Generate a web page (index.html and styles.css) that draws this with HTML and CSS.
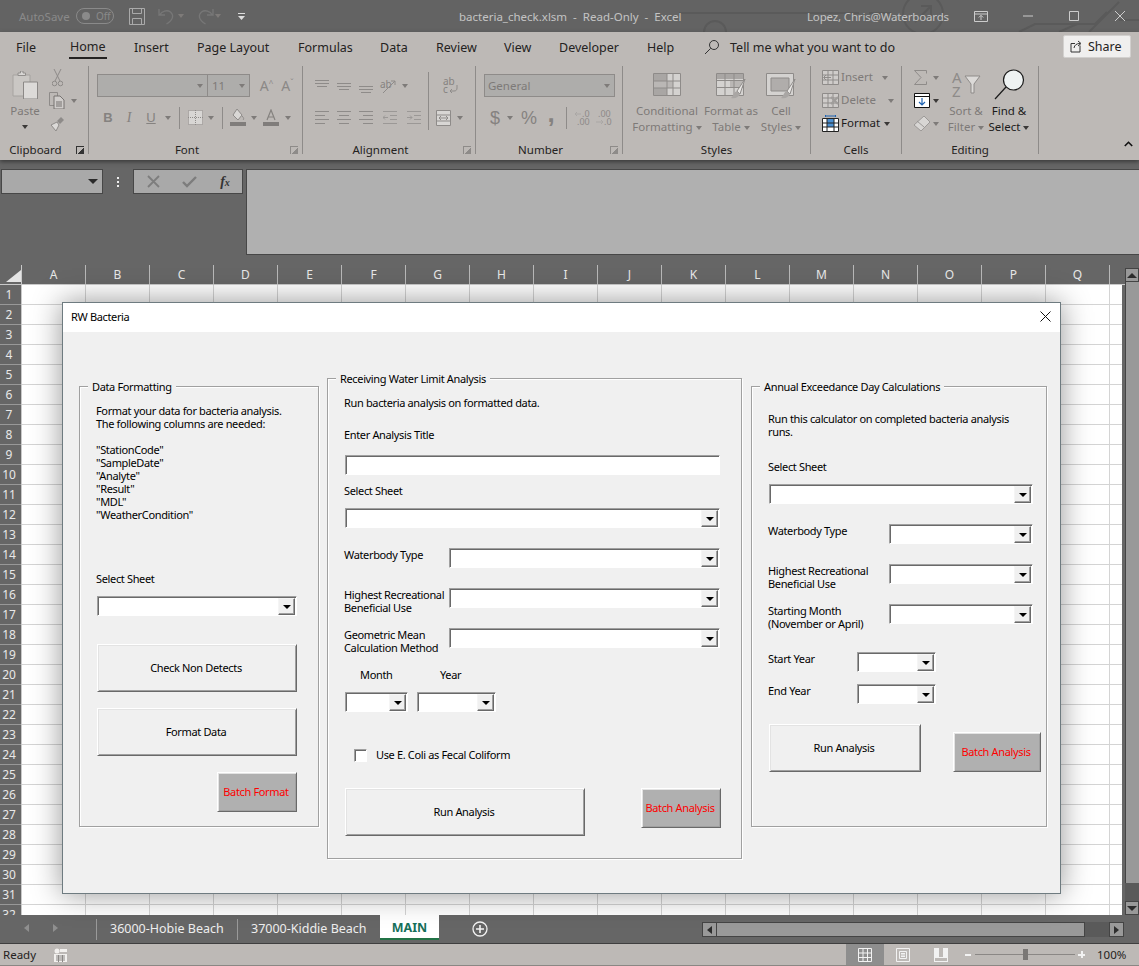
FILE: index.html
```html
<!DOCTYPE html>
<html lang="en">
<head>
<meta charset="utf-8">
<title>bacteria_check.xlsm - Read-Only - Excel</title>
<link rel="stylesheet" href="styles.css">
</head>
<body>
<div class="app">
  <header class="titlebar">
    <svg class="circuit" width="520" height="32" viewBox="0 0 520 32"><g fill="none" stroke="#5a5a5a" stroke-width="2"><path d="M60 13h180"/><path d="M250 13h22"/><circle cx="304" cy="14" r="20"/><path d="M296 22l16-16M302 6h10v10"/><path d="M400 32l16-8h60l12-12M440 32l18-8M470 32l30-30M500 20h20"/></g><circle cx="96" cy="32" r="11" fill="none" stroke="#5a5a5a" stroke-width="2"/></svg>
    <div class="qat">
      <span class="autosave">AutoSave</span>
      <span class="toggle"><i class="toggle-dot"></i><span>Off</span></span>
      <svg class="save" width="16" height="17" viewBox="0 0 16 17"><path d="M.5.5h15v16H.5zM3.5.5v5h9v-5M3.5 16.5v-6h9v6" fill="none" stroke="#aaa"/></svg>
      <svg class="undo" width="18" height="18" viewBox="0 0 18 18"><path d="M1 2v6h6M1.5 8C4 4 9 2.5 12.5 5c3.5 3 3 8-4 12" fill="none" stroke="#777" stroke-width="1.3"/></svg>
      <i class="caret caret-dim"></i>
      <svg class="redo" width="18" height="18" viewBox="0 0 18 18"><path d="M17 2v6h-6M16.500 8C14 4 9 2.500 5.500 5c-3.500 3-3 8 4 12" fill="none" stroke="#777" stroke-width="1.300"/></svg>
      <i class="caret caret-dim"></i>
      <svg class="custom" width="7" height="7" viewBox="0 0 7 7"><path d="M0 0h7v1H0zM0 3h7L3.500 7z" fill="#ddd"/></svg>
    </div>
    <div class="doc-title">bacteria_check.xlsm &nbsp;-&nbsp; Read-Only &nbsp;-&nbsp; Excel</div>
    <div class="win">
      <span class="user">Lopez, Chris@Waterboards</span>
      <svg class="w-display" width="14" height="11" viewBox="0 0 14 11"><path d="M.5.500h13v10H.5zM.5 3h13M7 9V4.500M4.800 6.500 7 4.300l2.200 2.200" fill="none" stroke="#ccc"/></svg>
      <svg class="w-min" width="10" height="2" viewBox="0 0 10 2"><path d="M0 1h10" stroke="#ccc"/></svg>
      <svg class="w-max" width="10" height="10" viewBox="0 0 10 10"><path d="M.5.500h9v9h-9z" fill="none" stroke="#ccc"/></svg>
      <svg class="w-close" width="10" height="10" viewBox="0 0 10 10"><path d="M0 0l10 10M10 0 0 10" stroke="#ccc"/></svg>
    </div>
  </header>

  <section class="ribbon">
    <nav class="tabs">
      <span class="tab t-file">File</span>
      <span class="tab t-home">Home</span>
      <span class="tab t-insert">Insert</span>
      <span class="tab t-layout">Page Layout</span>
      <span class="tab t-formulas">Formulas</span>
      <span class="tab t-data">Data</span>
      <span class="tab t-review">Review</span>
      <span class="tab t-view">View</span>
      <span class="tab t-dev">Developer</span>
      <span class="tab t-help">Help</span>
      <svg class="t-search" width="16" height="16" viewBox="0 0 16 16"><circle cx="10" cy="6" r="4.500" fill="none" stroke="#333"/><path d="M6.700 9.300 1 15" stroke="#333"/></svg>
      <span class="tab t-tell">Tell me what you want to do</span>
      <span class="share"><svg width="14" height="14" viewBox="0 0 14 14"><path d="M10 6.500V13H1V4.500h4M4 9c.5-3 2.500-4.500 6-4.500M8 2l3 2.500L8 7" fill="none" stroke="#333"/></svg>Share</span>
    </nav>
    <div class="groups">
      <div class="group g-clip">
        <div class="gbody">
          <div class="big b-paste">
            <div class="big-ic"><svg width="26" height="28" viewBox="0 0 26 28"><path d="M1 4h17v21H1z" fill="#cac7c4" stroke="#a6a3a0"/><path d="M6 4V2h2.500V0h2.500v2h2.500v2.500H6z" fill="#d8d6d4" stroke="#918e8c"/><path d="M11.500 11h14v17h-14z" fill="#dcdad8" stroke="#8b8886"/></svg></div>
            <span class="dim">Paste</span><i class="caret caret-big"></i>
          </div>
          <div class="rows23 clip-small">
            <div class="row"><svg class="ml7" width="11" height="18" viewBox="0 0 11 18"><path d="M2 0l6 12M9 0 3 12" stroke="#8e8b89" fill="none"/><circle cx="2.500" cy="14.500" r="2.300" fill="none" stroke="#8e8b89"/><circle cx="8.500" cy="14.500" r="2.300" fill="none" stroke="#8e8b89"/></svg></div>
            <div class="row"><svg width="17" height="17" viewBox="0 0 17 17"><path d="M.5.500h8v13h-8z" fill="none" stroke="#8e8b89"/><path d="M5 4h6l4 4v9H5z" fill="#cfccca" stroke="#767371"/><path d="M7 10h6M7 12h6M7 14h6" stroke="#767371"/></svg><i class="caret caret-dim cml"></i></div>
            <div class="row"><svg width="16" height="16" viewBox="0 0 16 16"><path d="M12 1l3 3-4 4-3-3z" fill="#8e8b89"/><path d="M8 6 2 9l5 6 3-6z" fill="#dbd9d7" stroke="#8e8b89"/></svg></div>
          </div>
        </div>
        <div class="glabel"><span>Clipboard</span><i class="launch launch-on"></i></div>
      </div>

      <div class="group g-font">
        <div class="gbody">
          <div class="rows2">
            <div class="font-r1">
              <span class="box box-font"><i class="caret caret-dim"></i></span>
              <span class="box box-size"><span class="dim">11</span><i class="caret caret-dim"></i></span>
              <span class="grow-a">A<sup>^</sup></span>
              <span class="grow-a">A<sup>ˇ</sup></span>
            </div>
            <div class="font-r2">
              <b class="glyph">B</b>
              <i class="glyph glyph-i">I</i>
              <u class="glyph">U</u>
              <i class="caret caret-dim"></i>
              <i class="vline"></i>
              <svg width="15" height="15" viewBox="0 0 15 15"><path d="M.5.500h14v14H.5z" fill="#d8d6d4" stroke="#8e8b89" stroke-dasharray="1 1"/><path d="M7.500 0v15M0 7.500h15" stroke="#8e8b89" stroke-dasharray="1 1"/></svg>
              <i class="caret caret-dim"></i>
              <i class="vline"></i>
              <svg width="16" height="17" viewBox="0 0 16 17"><path d="M7 0l5 6-4 5-5-5z" fill="#d9d7d5" stroke="#8e8b89"/><path d="M12 7c2 2 2 3 1 4" stroke="#8e8b89" fill="none"/><path d="M0 13h16v4H0z" fill="#807d7b"/></svg>
              <i class="caret caret-dim"></i>
              <svg width="16" height="17" viewBox="0 0 16 17"><path d="M4 11 8 1l4 10M5.500 8h5" fill="none" stroke="#85827f" stroke-width="1.200"/><path d="M0 13h16v4H0z" fill="#807d7b"/></svg>
              <i class="caret caret-dim"></i>
            </div>
          </div>
        </div>
        <div class="glabel"><span>Font</span><i class="launch"></i></div>
      </div>

      <div class="group g-align">
        <div class="gbody">
          <div class="rows2 align-left">
            <div class="align-r1">
              <svg width="14" height="14" viewBox="0 0 14 14"><path d="M0 1.500h14M0 4.500h14M2 7.500h10" stroke="#8e8b89"/></svg>
              <svg width="14" height="14" viewBox="0 0 14 14"><path d="M0 4.500h14M0 7.500h14M2 10.500h10" stroke="#8e8b89"/></svg>
              <svg width="14" height="14" viewBox="0 0 14 14"><path d="M0 7.500h14M0 10.500h14M2 13.500h10" stroke="#8e8b89"/></svg>
              <svg class="vis" width="17" height="14" viewBox="0 0 17 14"><text x="0" y="9" class="svgt">ab</text><path d="M3 14 15 2M11 2h4v4" stroke="#8e8b89" fill="none"/></svg>
              <i class="caret caret-dim"></i>
            </div>
            <div class="align-r2">
              <svg width="14" height="13" viewBox="0 0 14 13"><path d="M0 .500h14M0 4.500h10M0 8.500h14M0 12.500h10" stroke="#8e8b89"/></svg>
              <svg width="14" height="13" viewBox="0 0 14 13"><path d="M0 .500h14M2 4.500h10M0 8.500h14M2 12.500h10" stroke="#8e8b89"/></svg>
              <svg width="14" height="13" viewBox="0 0 14 13"><path d="M0 .500h14M4 4.500h10M0 8.500h14M4 12.500h10" stroke="#8e8b89"/></svg>
              <svg width="14" height="13" viewBox="0 0 14 13"><path d="M0 .500h14M7 4.500h7M7 8.500h7M0 12.500h14M5 6.500H0M2 4.500l-2 2 2 2" fill="none" stroke="#9b9896"/></svg>
              <svg width="14" height="13" viewBox="0 0 14 13"><path d="M0 .500h14M7 4.500h7M7 8.500h7M0 12.500h14M0 6.500h5M3 4.500l2 2-2 2" fill="none" stroke="#9b9896"/></svg>
            </div>
          </div>
          <i class="vline vline-tall"></i>
          <div class="rows2 align-right">
            <div class="wrap-row"><svg class="vis" width="16" height="18" viewBox="0 0 16 18"><text x="0" y="8" class="svgt">ab</text><text x="0" y="16" class="svgt">c</text><path d="M14 8v3c0 2-1 3-3 3H7M9 12l-2 2 2 2" fill="none" stroke="#8e8b89"/></svg></div>
            <div class="merge-row"><svg width="15" height="16" viewBox="0 0 15 16"><path d="M.5.500h14v15H.5zM0 5h15M0 11h15" fill="#d8d6d4" stroke="#8e8b89"/><path d="M3 8h9M5 6 3 8l2 2M10 6l2 2-2 2" fill="none" stroke="#8e8b89"/></svg><i class="caret caret-dim"></i></div>
          </div>
        </div>
        <div class="glabel"><span>Alignment</span><i class="launch"></i></div>
      </div>

      <div class="group g-num">
        <div class="gbody">
          <div class="rows2">
            <div class="num-r1"><span class="box box-num"><span class="dim">General</span><i class="caret caret-dim"></i></span></div>
            <div class="num-r2">
              <span class="glyph glyph-big">$</span>
              <i class="caret caret-dim"></i>
              <span class="glyph glyph-big">%</span>
              <span class="glyph glyph-comma">,</span>
              <i class="vline"></i>
              <svg class="vis" width="18" height="14" viewBox="0 0 18 14"><text x="8" y="6" class="svgs">.0</text><text x="3" y="14" class="svgs">.00</text><path d="M7 3H1M3 1 1 3l2 2" fill="none" stroke="#aaa7a5"/></svg>
              <svg class="vis" width="18" height="14" viewBox="0 0 18 14"><text x="3" y="6" class="svgs">.00</text><text x="9" y="14" class="svgs">.0</text><path d="M1 11h7M6 9l2 2-2 2" fill="none" stroke="#aaa7a5"/></svg>
            </div>
          </div>
        </div>
        <div class="glabel"><span>Number</span><i class="launch"></i></div>
      </div>

      <div class="group g-styles">
        <div class="gbody">
          <div class="big b-cond">
            <div class="big-ic"><svg width="28" height="23" viewBox="0 0 28 23"><path d="M.5.500h27v22H.5z" fill="#d4d2d0" stroke="#8e8b89"/><path d="M1 1h13v7H1zM1 15h13v7H1z" fill="#a9a6a4"/><path d="M1 8h19v7H1z" fill="#bab7b5"/><path d="M0 8h28M0 15h28M14 0v23M20 0v23" stroke="#8e8b89"/></svg></div>
            <span class="dim">Conditional</span><span class="dim">Formatting<i class="caret caret-dim cin"></i></span>
          </div>
          <div class="big b-table">
            <div class="big-ic"><svg width="30" height="27" viewBox="0 0 30 27"><path d="M.5.500h27v22H.5z" fill="#d4d2d0" stroke="#8e8b89"/><path d="M1 1h26v5H1z" fill="#a9a6a4"/><path d="M14 7h13v7H14z" fill="#bab7b5"/><path d="M0 7.500h28M0 14.500h28M9 0v23M18 0v23" stroke="#8e8b89"/><path d="M29 6 21 18l3 3z" fill="#e8e6e4" stroke="#8e8b89"/><path d="M21 18c-3 1-3 4-6 7 4 1 8-1 9-4z" fill="#a9a6a4"/></svg></div>
            <span class="dim">Format as</span><span class="dim">Table<i class="caret caret-dim cin"></i></span>
          </div>
          <div class="big b-cell">
            <div class="big-ic"><svg width="30" height="27" viewBox="0 0 30 27"><path d="M.5.500h27v22H.5z" fill="#d4d2d0" stroke="#8e8b89"/><path d="M5 5h18v13H5z" fill="#b0adab" stroke="#8e8b89"/><path d="M29 6 21 18l3 3z" fill="#e8e6e4" stroke="#8e8b89"/><path d="M21 18c-3 1-3 4-6 7 4 1 8-1 9-4z" fill="#a9a6a4"/></svg></div>
            <span class="dim">Cell</span><span class="dim">Styles<i class="caret caret-dim cin"></i></span>
          </div>
        </div>
        <div class="glabel glabel-c"><span>Styles</span></div>
      </div>

      <div class="group g-cells">
        <div class="gbody">
          <div class="rows23">
            <div class="row"><svg class="cell-ic" width="17" height="15" viewBox="0 0 17 15"><path d="M.5.500h16v14H.5zM0 5h17M0 10h17M6 0v15M11 0v15" fill="#cfccca" stroke="#8e8b89"/><path d="M9 7.500H2M4 5 1.500 7.500 4 10" fill="none" stroke="#8e8b89"/></svg><span class="dim">Insert</span><i class="caret caret-dim c-ins"></i></div>
            <div class="row"><svg class="cell-ic" width="17" height="15" viewBox="0 0 17 15"><path d="M.5.500h16v14H.5zM0 5h17M0 10h17M6 0v15M11 0v15" fill="#cfccca" stroke="#8e8b89"/><path d="M9 4l7 7M16 4l-7 7" stroke="#a09d9b" stroke-width="2"/></svg><span class="dim">Delete</span><i class="caret caret-dim c-del"></i></div>
            <div class="row"><svg class="cell-ic" width="17" height="17" viewBox="0 0 17 17"><path d="M.5 3.500h16v13H.5z" fill="#fff" stroke="#222"/><path d="M5 4h7v8H5z" fill="#4a8fd1"/><path d="M0 8h17M0 12h17M5 3v14M12 3v14" stroke="#222"/><path d="M3.500 1h10M3.500 0v2M13.500 0v2" stroke="#1e62b0"/></svg><span class="on">Format</span><i class="caret c-fmt"></i></div>
          </div>
        </div>
        <div class="glabel glabel-c"><span>Cells</span></div>
      </div>

      <div class="group g-edit">
        <div class="gbody">
          <div class="rows23 edit-small">
            <div class="row"><svg width="13" height="15" viewBox="0 0 13 15"><path d="M12.500 3.500V.5H.5L7 7.500.5 14.500h12v-3" fill="none" stroke="#8e8b89"/></svg><i class="caret caret-dim c-sig"></i></div>
            <div class="row"><svg width="16" height="15" viewBox="0 0 16 15"><path d="M.5.500h15v14H.5z" fill="#fff" stroke="#111"/><path d="M0 3.500h16" stroke="#111"/><path d="M8 5v7M5 9l3 3 3-3" fill="none" stroke="#1e62b0" stroke-width="1.200"/></svg><i class="caret c-fill"></i></div>
            <div class="row"><svg width="16" height="15" viewBox="0 0 16 15"><path d="M10 0l6 6-9 9-7-6z" fill="#d8d6d4" stroke="#9c9997"/><path d="M3 5l7 6" stroke="#9c9997"/></svg><i class="caret caret-dim c-clr"></i></div>
          </div>
          <div class="big b-sort">
            <div class="big-ic"><svg class="vis" width="29" height="26" viewBox="0 0 29 26"><text x="0" y="11" class="svgz">A</text><text x="0" y="25" class="svgz">Z</text><path d="M13 4h15l-6 8v9h-3v-9z" fill="#dcdad8" stroke="#8e8b89"/></svg></div>
            <span class="dim">Sort &amp;</span><span class="dim">Filter<i class="caret caret-dim cin"></i></span>
          </div>
          <div class="big b-find">
            <div class="big-ic"><svg width="31" height="31" viewBox="0 0 31 31"><circle cx="19.500" cy="11" r="10" fill="#eef2f2" stroke="#1b1b1b" stroke-width="1.200"/><path d="M12 18 1 30" stroke="#1b1b1b" stroke-width="1.200"/></svg></div>
            <span class="on">Find &amp;</span><span class="on">Select<i class="caret cin"></i></span>
          </div>
        </div>
        <div class="glabel glabel-c"><span>Editing</span></div>
      </div>
      <svg class="collapse" width="9" height="6" viewBox="0 0 9 6"><path d="M.8 5 4.500 1.300 8.200 5" fill="none" stroke="#111" stroke-width="1.600"/></svg>
    </div>
  </section>

  <section class="formula">
    <div class="namebox"><i class="caret caret-dark"></i></div>
    <div class="fdots"><i></i><i></i><i></i></div>
    <div class="fbtns">
      <svg width="13" height="13" viewBox="0 0 13 13"><path d="M1 1l11 11M12 1 1 12" stroke="#7d7d7d" stroke-width="1.800"/></svg>
      <svg width="15" height="12" viewBox="0 0 15 12"><path d="M1 6l4 4 9-9" fill="none" stroke="#7d7d7d" stroke-width="2.400"/></svg>
      <span class="fx">f<small>x</small></span>
    </div>
    <div class="finput"></div>
  </section>

  <section class="sheet">
    <div class="sheet-main">
      <div class="colheads">
        <div class="corner"><svg width="15" height="12" viewBox="0 0 15 12"><path d="M15 0v12H0z" fill="#e4e4e4"/></svg></div>
        <span class="col">A</span><span class="col">B</span><span class="col">C</span><span class="col">D</span><span class="col">E</span><span class="col">F</span><span class="col">G</span><span class="col">H</span><span class="col">I</span><span class="col">J</span><span class="col">K</span><span class="col">L</span><span class="col">M</span><span class="col">N</span><span class="col">O</span><span class="col">P</span><span class="col">Q</span>
      </div>
      <div class="cells-wrap">
        <div class="rowheads">
          <span>1</span><span>2</span><span>3</span><span>4</span><span>5</span><span>6</span><span>7</span><span>8</span><span>9</span><span>10</span><span>11</span><span>12</span><span>13</span><span>14</span><span>15</span><span>16</span><span>17</span><span>18</span><span>19</span><span>20</span><span>21</span><span>22</span><span>23</span><span>24</span><span>25</span><span>26</span><span>27</span><span>28</span><span>29</span><span>30</span><span>31</span><span>32</span>
        </div>
        <div class="cells"></div>
      </div>
    </div>
    <div class="vscroll">
      <span class="sb-btn"><i class="tri tri-up"></i></span>
      <span class="v-thumb"></span>
      <span class="v-track"></span>
      <span class="sb-btn"><i class="tri tri-down"></i></span>
    </div>
  </section>

  <footer class="sheetbar">
    <i class="tri tri-left nav-a"></i>
    <i class="tri tri-right nav-b"></i>
    <span class="stab stab-first">36000-Hobie Beach</span>
    <span class="stab">37000-Kiddie Beach</span>
    <span class="stab-main">MAIN</span>
    <svg class="addsheet" width="16" height="16" viewBox="0 0 16 16"><circle cx="8" cy="8" r="7" fill="none" stroke="#f2f2f2" stroke-width="1.300"/><path d="M8 4v8M4 8h8" stroke="#f2f2f2" stroke-width="1.600"/></svg>
    <div class="hscroll">
      <span class="sb-btn sb-h"><i class="tri tri-left tri-dark"></i></span>
      <span class="h-thumb"></span>
      <span class="h-track"></span>
      <span class="sb-btn sb-h"><i class="tri tri-right tri-dark"></i></span>
    </div>
  </footer>

  <footer class="status">
    <span class="ready">Ready</span>
    <svg class="macro" width="13" height="14" viewBox="0 0 13 14"><circle cx="3" cy="3" r="2.500" fill="#f2f0ee"/><path d="M6 1h7v3H6zM0 6h13v8H0z" fill="#f2f0ee"/><path d="M2 8h9M2 10h9M2 12h9M4.500 7v7M8.500 7v7" stroke="#8b8886"/></svg>
    <div class="views">
      <span class="view view-on"><svg width="14" height="14" viewBox="0 0 14 14"><path d="M.5.500h13v13H.5zM0 5h14M0 9.500h14M5 0v14M9.500 0v14" fill="none" stroke="#f2f2f2"/></svg></span>
      <span class="view"><svg width="14" height="14" viewBox="0 0 14 14"><path d="M.5.500h13v13H.5z" fill="none" stroke="#f2f2f2"/><path d="M3.500 3.500h7v7h-7zM5 5.500h4M5 7h4M5 8.500h4" fill="none" stroke="#f2f2f2"/></svg></span>
      <span class="view"><svg width="14" height="14" viewBox="0 0 14 14"><path d="M0 0h5v9h4V0h5v14H0z" fill="#f2f2f2"/><path d="M1 10h12v3H1z" fill="#bdb9b6"/></svg></span>
    </div>
    <div class="zoomer">
      <i class="z-minus"></i>
      <span class="z-line"><i class="z-thumb"></i></span>
      <i class="z-plus"></i>
    </div>
    <span class="pct">100%</span>
  </footer>

  <div class="dialog">
    <div class="dlg-title">
      <span>RW Bacteria</span>
      <svg width="11" height="11" viewBox="0 0 11 11"><path d="M.5.500l10 10M10.500.500l-10 10" stroke="#111"/></svg>
    </div>
    <div class="dlg-body">
      <div class="fbox fb-1">
        <span class="legend">Data Formatting</span>
        <div class="txt pre">Format your data for bacteria analysis.
The following columns are needed:

"StationCode"
"SampleDate"
"Analyte"
"Result"
"MDL"
"WeatherCondition"</div>
        <div class="txt m51">Select Sheet</div>
        <div class="combo m11"><span class="cbtn"></span></div>
        <button class="btn b-wide m28">Check Non Detects</button>
        <button class="btn b-wide m16">Format Data</button>
        <button class="btn btn-batch bf m16">Batch Format</button>
      </div>

      <div class="fbox fb-2">
        <span class="legend">Receiving Water Limit Analysis</span>
        <div class="txt">Run bacteria analysis on formatted data.</div>
        <div class="txt m19">Enter Analysis Title</div>
        <div class="input m14"></div>
        <div class="txt m9">Select Sheet</div>
        <div class="combo m11"><span class="cbtn"></span></div>
        <div class="frow fr-2 m20"><div class="txt">Waterbody Type</div><div class="combo"><span class="cbtn"></span></div></div>
        <div class="frow fr-2 m20"><div class="txt">Highest Recreational<br>Beneficial Use</div><div class="combo"><span class="cbtn"></span></div></div>
        <div class="frow fr-2 m20"><div class="txt">Geometric Mean<br>Calculation Method</div><div class="combo"><span class="cbtn"></span></div></div>
        <div class="my-labels m20"><span class="txt">Month</span><span class="txt">Year</span></div>
        <div class="my-combos m11"><div class="combo c-month"><span class="cbtn"></span></div><div class="combo c-year"><span class="cbtn"></span></div></div>
        <label class="check"><span class="cbx"></span><span class="txt">Use E. Coli as Fecal Coliform</span></label>
        <div class="btnrow m26"><button class="btn b-run2">Run Analysis</button><button class="btn btn-batch bb2">Batch Analysis</button></div>
      </div>

      <div class="fbox fb-3">
        <span class="legend">Annual Exceedance Day Calculations</span>
        <div class="txt">Run this calculator on completed bacteria analysis<br>runs.</div>
        <div class="txt m22">Select Sheet</div>
        <div class="combo m11"><span class="cbtn"></span></div>
        <div class="frow fr-3 m20"><div class="txt">Waterbody Type</div><div class="combo"><span class="cbtn"></span></div></div>
        <div class="frow fr-3 m20"><div class="txt">Highest Recreational<br>Beneficial Use</div><div class="combo"><span class="cbtn"></span></div></div>
        <div class="frow fr-3 m20"><div class="txt">Starting Month<br>(November or April)</div><div class="combo"><span class="cbtn"></span></div></div>
        <div class="frow fr-y m28"><div class="txt">Start Year</div><div class="combo c-year"><span class="cbtn"></span></div></div>
        <div class="frow fr-y m12"><div class="txt">End Year</div><div class="combo c-year"><span class="cbtn"></span></div></div>
        <div class="btnrow btnrow-end m20"><button class="btn b-run3">Run Analysis</button><button class="btn btn-batch bb3">Batch Analysis</button></div>
      </div>
    </div>
  </div>
</div>
</body>
</html>
```

FILE: styles.css
```css
* { box-sizing: border-box; }
html, body { margin: 0; padding: 0; }
body { width: 1139px; height: 966px; overflow: hidden; background: #666; font-family: "Noto Sans", "Liberation Sans", sans-serif; font-size: 12px; color: #222; }
.app { position: relative; width: 1139px; height: 966px; overflow: hidden; display: flex; flex-direction: column; }
i { font-style: normal; display: block; }
svg { display: block; flex: none; }
.vis { overflow: visible; }

.caret { width: 0; height: 0; border: 3px solid transparent; border-top: 4px solid #3b3938; border-bottom: 0; flex: none; }
.caret-dim { border-top-color: #7e7b79; }
.caret-dark { border-top-color: #2a2a2a; border-left-width: 5px; border-right-width: 5px; border-top-width: 5px; }

/* title bar */
.titlebar { position: relative; height: 32px; flex: none; background: #636363; display: grid; grid-template-columns: 459px 348px 1fr; align-items: center; color: #c4c4c4; font-size: 11.500px; }
.circuit { position: absolute; right: 0; top: 0; }
.qat, .doc-title, .win { position: relative; }
.qat { display: flex; align-items: center; padding-left: 19px; }
.autosave { color: #8a8a8a; width: 57px; }
.toggle { width: 38px; height: 16px; border: 1px solid #8a8a8a; border-radius: 8px; display: flex; align-items: center; padding-left: 5px; color: #8a8a8a; font-size: 10px; gap: 6px; }
.toggle-dot { width: 8px; height: 8px; border-radius: 50%; background: #8a8a8a; }
.save { margin-left: 15px; }
.undo { margin-left: 13px; }
.undo + .caret { margin-left: 2px; }
.redo { margin-left: 12px; }
.redo + .caret { margin-left: 1px; }
.custom { margin-left: 17px; }
.win { display: flex; align-items: center; }
.user { width: 167px; white-space: nowrap; letter-spacing: -.16px; }
.w-min { margin-left: 35px; }
.w-max { margin-left: 36px; }
.w-close { margin-left: 36px; }

/* ribbon */
.ribbon { height: 128px; flex: none; background: #bdb9b6; box-shadow: 0 2px 4px #3c3c3c; position: relative; z-index: 2; }
.tabs { height: 28px; display: flex; align-items: center; padding-top: 2px; font-size: 12.500px; color: #242221; position: relative; }
.tab { flex: none; white-space: nowrap; }
.t-file { margin-left: 16px; width: 54px; }
.t-home { width: 64px; height: 26px; line-height: 26px; position: relative; }
.t-home::after { content: ""; position: absolute; left: -1px; top: 23px; width: 38px; height: 2px; background: #242221; }
.t-insert { width: 63px; }
.t-layout { width: 101px; }
.t-formulas { width: 82px; }
.t-data { width: 56px; }
.t-review { width: 68px; }
.t-view { width: 55px; }
.t-dev { width: 88px; }
.t-help { width: 57px; }
.t-search { margin-right: 10px; }
.t-tell { width: 333px; }
.share { position: relative; top: -1px; width: 68px; height: 23px; background: #f0efee; border: 1px solid #d2d0ce; border-radius: 2px; display: flex; align-items: center; gap: 4px; padding-left: 6px; flex: none; }

.groups { display: flex; height: 100px; padding-top: 6px; position: relative; }
.group { height: 88px; display: flex; flex-direction: column; border-right: 1px solid #8e8b89; flex: none; }
.gbody { height: 76px; display: flex; flex: none; line-height: 16px; }
.glabel { height: 12px; margin-top: 2px; display: flex; align-items: center; line-height: 16px; color: #242221; flex: none; }
.glabel span { flex: 1; text-align: center; font-size: 11.500px; }
.launch { width: 17px; height: 7px; position: relative; }
.launch::after { content: ""; position: absolute; left: 5px; top: -1px; width: 7px; height: 7px; border-left: 1px solid #8e8b89; border-top: 1px solid #8e8b89; background: linear-gradient(135deg, transparent 55%, #8e8b89 55%); }
.launch-on::after { border-color: #333; background: linear-gradient(135deg, transparent 55%, #333 55%); }

.g-clip { width: 89px; }
.g-font { width: 214px; }
.g-align { width: 173px; }
.g-num { width: 147px; }
.g-styles { width: 188px; }
.g-cells { width: 91px; }
.g-edit { width: 137px; }
.collapse { position: absolute; right: 6px; top: 81px; }

.dim { color: #7d7a78; white-space: nowrap; }
.on { color: #1c1b1a; white-space: nowrap; }
.big { display: flex; flex-direction: column; align-items: center; flex: none; }
.big > span { height: 16px; font-size: 11.500px; }
.big-ic { height: 37px; display: flex; align-items: center; justify-content: center; }
.b-table .big-ic, .b-cell .big-ic { padding-top: 4px; }
.caret-big { margin-top: 6px; }
.cin { display: inline-block; margin-left: 3px; vertical-align: middle; }
.b-paste { width: 34px; margin-left: 8px; }
.clip-small { margin-left: 7px; width: 36px; }
.rows23 .row { height: 23px; display: flex; align-items: center; font-size: 11.500px; }
.rows23 .row > span { padding-bottom: 1px; }
.ml7 { margin-left: 3px; }
.cml { margin-left: 5px; }

.rows2 { padding-top: 8px; }
.font-r1 { height: 23px; display: flex; align-items: center; margin-left: 8px; }
.box { height: 23px; border: 1px solid #8e8b89; background: #aeadab; display: flex; align-items: center; flex: none; font-size: 11.500px; }
.box-font { width: 111px; justify-content: flex-end; padding-right: 4px; }
.box-size { width: 43px; margin-left: -1px; justify-content: space-between; padding: 0 4px; }
.grow-a { color: #8b8886; font-size: 14px; width: 21px; text-align: center; white-space: nowrap; line-height: 20px; }
.grow-a:nth-child(3) { margin-left: 6px; }
.grow-a sup { font-size: 8px; line-height: 0; vertical-align: 5px; }
.font-r2 { height: 23px; margin: 9px 0 0 8px; display: grid; grid-template-columns: 22px 20px 24px 10px 12px 20px 12px 10px 22px 10px 24px 10px; align-items: center; justify-items: center; }
.glyph { color: #858280; font-size: 13px; font-weight: 400; text-decoration: none; font-family: "Liberation Sans", sans-serif; }
b.glyph { font-weight: 700; }
u.glyph { text-decoration: underline; }
.glyph-i { font-family: "Liberation Serif", serif; font-style: italic; display: inline; font-size: 14px; }
.glyph-big { font-size: 18px; font-weight: 400; }
.glyph-comma { font-size: 26px; font-weight: 700; line-height: 14px; position: relative; top: -5px; }
.vline { width: 1px; height: 22px; background: #8e8b89; }
.vline-tall { height: 58px; margin-top: 6px; flex: none; }

.align-left { width: 117px; margin-left: 8px; flex: none; }
.align-r1 { height: 23px; display: grid; grid-template-columns: 22px 22px 22px 23px 10px; align-items: center; justify-items: center; }
.align-r2 { height: 23px; margin-top: 9px; display: grid; grid-template-columns: 22px 22px 22px 26px 22px; align-items: center; justify-items: center; }
.align-right { flex: none; width: 42px; }
.wrap-row { height: 23px; display: flex; justify-content: center; align-items: center; padding-left: 2px; }
.merge-row { height: 23px; margin: 9px 0 0 7px; display: flex; align-items: center; gap: 6px; }
.svgt { font: 10px "Noto Sans", sans-serif; fill: #858280; }
.svgs { font: 9px "Noto Sans", sans-serif; fill: #8e8b89; }
.svgz { font: 15px "Noto Sans", sans-serif; fill: #8e8b89; }

.num-r1 { margin-left: 8px; height: 23px; }
.box-num { width: 131px; justify-content: space-between; padding: 0 4px 0 3px; }
.num-r2 { height: 23px; margin: 9px 0 0 8px; display: grid; grid-template-columns: 22px 8px 30px 14px 16px 18px 24px; align-items: center; justify-items: center; }

.b-cond { width: 88px; }
.b-table { width: 40px; }
.b-cell { width: 60px; }

.g-cells .rows23 { padding-left: 11px; }
.cell-ic { margin-right: 2px; width: 17px; }
.c-ins { margin-left: 9px; }
.c-del { margin-left: 12px; }
.c-fmt { margin-left: 4px; }
.edit-small { margin-left: 11px; width: 30px; }
.edit-small .row { padding-left: 1px; }
.c-sig { margin-left: 6px; }
.c-fill { margin-left: 3px; }
.c-clr { margin-left: 3px; }
.b-sort { width: 46px; }
.b-find { width: 40px; }

/* formula bar */
.formula { height: 105px; flex: none; background: #666; display: flex; padding: 9px 0 0 1px; align-items: flex-start; }
.namebox { width: 102px; height: 25px; background: #a9a9a9; border: 1px solid #474747; display: flex; align-items: center; justify-content: flex-end; padding-right: 4px; flex: none; }
.fdots { width: 30px; height: 25px; display: flex; flex-direction: column; align-items: center; justify-content: center; gap: 2px; flex: none; }
.fdots i { width: 2px; height: 2px; background: #eee; }
.fbtns { width: 110px; height: 25px; background: #a9a9a9; border: 1px solid #474747; display: grid; grid-template-columns: 36px 36px 36px; align-items: center; justify-items: center; padding-left: 1px; flex: none; }
.fx { font: italic 700 14px "Liberation Serif", serif; color: #333; }
.fx small { font-size: 10px; }
.finput { flex: 1; height: 86px; margin-left: 3px; background: #b0b0b0; border: 1px solid #474747; border-right: 0; }

/* sheet */
.sheet { height: 650px; flex: none; display: flex; background: #666; }
.sheet-main { width: 1125px; flex: none; display: flex; flex-direction: column; }
.colheads { height: 20px; display: flex; flex: none; border-bottom: 1px solid #c9c9c9; }
.corner { width: 22px; flex: none; padding: 5px 0 0 6px; border-right: 1px solid #c9c9c9; }
.col { width: 64px; flex: none; border-right: 1px solid #b8b8b8; text-align: center; color: #e8e8e8; line-height: 19px; font-size: 12px; }
.cells-wrap { height: 630px; display: flex; overflow: hidden; padding-right: 3px; }
.rowheads { width: 22px; flex: none; border-right: 1px solid #c9c9c9; }
.rowheads span { display: block; height: 20px; line-height: 19px; padding-right: 3px; text-align: center; color: #e8e8e8; border-bottom: 1px solid #989898; font-size: 12px; }
.cells { flex: 1; background-color: #fff; background-image: linear-gradient(to right, transparent 63px, #d4d4d4 63px), linear-gradient(to bottom, transparent 19px, #d4d4d4 19px); background-size: 64px 20px; }

.vscroll { width: 14px; flex: none; display: flex; flex-direction: column; padding-top: 3px; }
.sb-btn { width: 14px; height: 14px; flex: none; background: #999; border: 1px solid #444; display: flex; align-items: center; justify-content: center; }
.v-thumb { height: 601px; flex: none; background: #999; border-left: 1px solid #444; }
.v-track { height: 18px; flex: none; background: #5a5a5a; }
.tri { width: 0; height: 0; border: 4px solid transparent; flex: none; }
.tri-up { border-top: 0; border-bottom: 5px solid #2c2c2c; border-left-width: 5px; border-right-width: 5px; }
.tri-down { border-bottom: 0; border-top: 5px solid #2c2c2c; border-left-width: 5px; border-right-width: 5px; }
.tri-left { border-left: 0; border-right: 5px solid #8f8f8f; }
.tri-right { border-right: 0; border-left: 5px solid #8f8f8f; }
.tri-dark.tri-left { border-right-color: #2c2c2c; }
.tri-dark.tri-right { border-left-color: #2c2c2c; }

/* sheet tabs */
.sheetbar { height: 29px; flex: none; background: #666; border-bottom: 1px solid #3f3f3f; display: flex; align-items: flex-start; position: relative; z-index: 1; font-size: 12.500px; color: #eee; }
.nav-a { margin: 9px 0 0 24px; }
.nav-b { margin: 9px 0 0 24px; }
.stab { height: 21px; margin-top: 4px; line-height: 20px; border-left: 1px solid #9a9a9a; width: 141px; flex: none; padding-left: 13px; white-space: nowrap; }
.stab-first { margin-left: 38px; }
.stab-main { width: 59px; height: 25px; background: #fff; color: #176f5a; font-weight: 700; text-align: center; line-height: 25px; border-bottom: 2px solid #217346; margin-left: 2px; flex: none; }
.addsheet { margin: 6px 0 0 33px; }
.hscroll { margin: 7px 0 0 214px; width: 422px; height: 15px; display: flex; flex: none; }
.sb-h { width: 15px; height: 15px; }
.h-thumb { width: 368px; height: 15px; background: #999; border: 1px solid #444; border-left: 0; flex: none; }
.h-track { width: 24px; height: 15px; background: #5a5a5a; flex: none; }

/* status */
.status { height: 22px; flex: none; background: #bdb9b6; border-bottom: 1px solid #8a8784; display: flex; align-items: center; font-size: 11.500px; color: #242221; position: relative; z-index: 1; }
.ready { margin-left: 3px; width: 51px; }
.views { margin-left: 779px; display: flex; height: 21px; }
.view { width: 38px; height: 21px; display: flex; align-items: center; justify-content: center; flex: none; }
.view-on { background: #8e8e8e; }
.zoomer { display: flex; align-items: center; margin-left: 5px; }
.z-minus { width: 6px; height: 2px; background: #f2f2f2; }
.z-line { width: 100px; height: 1px; background: #8a8785; margin-left: 4px; position: relative; }
.z-thumb { position: absolute; left: 48px; top: -5px; width: 5px; height: 11px; background: #7a7775; }
.z-plus { width: 7px; height: 7px; margin-left: 3px; background: linear-gradient(#f2f2f2,#f2f2f2) center/7px 2px no-repeat, linear-gradient(#f2f2f2,#f2f2f2) center/2px 7px no-repeat; }
.pct { margin-left: 12px; }
.macro { flex: none; }

/* dialog */
.dialog { position: absolute; left: 62px; top: 302px; width: 999px; height: 592px; background: #f0f0f0; border: 1px solid #6e7b80; box-shadow: 0 0 28px rgba(0,0,0,.42); z-index: 5; font-family: "Noto Sans", "Liberation Sans", sans-serif; font-size: 11px; letter-spacing: -.35px; color: #000; }
.dlg-title { height: 29px; background: #fff; display: flex; align-items: center; justify-content: space-between; padding: 0 9px 2px 8px; }
.dlg-body { display: flex; align-items: flex-start; padding-left: 16px; }
.fbox { position: relative; border: 1px solid #a0a0a0; box-shadow: 1px 1px 0 #fff, inset 1px 1px 0 #fff; flex: none; display: flex; flex-direction: column; }
.fb-1 { width: 240px; height: 441px; margin-top: 54px; padding: 17px 21px 0 17px; }
.fb-2 { width: 415px; height: 481px; margin: 46px 0 0 8px; padding: 17px 21px 0 17px; }
.fb-3 { width: 296px; height: 441px; margin: 54px 0 0 9px; padding: 25px 13px 0 17px; }
.legend { position: absolute; left: 8px; top: -7px; line-height: 13px; padding: 0 4px; background: #f0f0f0; white-space: nowrap; }
.txt { line-height: 13px; white-space: nowrap; flex: none; margin-left: -1px; }
.pre { white-space: pre; }
.m9 { margin-top: 9px; }
.m11 { margin-top: 11px; }
.m12 { margin-top: 12px; }
.m14 { margin-top: 14px; }
.m16 { margin-top: 16px; }
.m19 { margin-top: 19px; }
.m20 { margin-top: 20px; }
.m22 { margin-top: 22px; }
.m26 { margin-top: 26px; }
.m28 { margin-top: 28px; }
.m51 { margin-top: 51px; }

.combo, .input { height: 20px; flex: none; background: #fff; border: 1px solid; border-color: #a0a0a0 #fff #fff #a0a0a0; box-shadow: inset 1px 1px 0 #696969; }
.combo { display: flex; justify-content: flex-end; padding: 1px 1px 0 0; }
.cbtn { width: 17px; height: 17px; background: #f0f0f0; border: 1px solid; border-color: #f5f5f5 #696969 #696969 #f5f5f5; box-shadow: inset -1px -1px 0 #a0a0a0; display: flex; align-items: center; justify-content: center; flex: none; }
.cbtn::after { content: ""; border: 4px solid transparent; border-top: 4px solid #000; border-bottom: 0; }

.btn { display: block; flex: none; padding: 0 2px 2px 0; font: inherit; letter-spacing: inherit; color: inherit; background: #f0f0f0; border: 1px solid; border-color: #fff #696969 #696969 #fff; box-shadow: inset 1px 1px 0 #e3e3e3, inset -1px -1px 0 #a0a0a0; }
.b-wide { width: 200px; height: 48px; }
.btn-batch { background: #b0b0b0; color: #f00; height: 40px; }
.bf { width: 80px; align-self: flex-end; }
.frow { height: 20px; display: flex; flex: none; }
.frow .txt { flex: none; line-height: 13px; }
.frow .combo { flex: 1; }
.fr-2 .txt { width: 105px; }
.fr-3 .txt { width: 121px; }
.fr-y .txt { width: 89px; }
.fr-y .combo { flex: none; }
.my-labels { display: flex; padding-left: 15px; flex: none; }
.my-labels .txt { margin-left: 0; }
.my-labels .txt:first-child { width: 80px; }
.my-combos { display: flex; gap: 9px; flex: none; }
.c-month { width: 63px; }
.c-year { width: 79px; }
.check { display: flex; align-items: center; margin: 37px 0 0 9px; gap: 10px; flex: none; height: 13px; }
.check .txt { padding-bottom: 2px; height: 15px; }
.cbx { width: 13px; height: 13px; background: #fff; border: 1px solid; border-color: #a0a0a0 #fff #fff #a0a0a0; box-shadow: inset 1px 1px 0 #696969; flex: none; }
.btnrow { display: flex; justify-content: space-between; align-items: flex-start; flex: none; }
.btnrow-end { align-items: flex-end; margin-right: -8px; }
.fb-2 .btnrow { margin-right: -1px; }
.b-run2 { width: 240px; height: 48px; }
.bb2 { width: 80px; }
.b-run3 { width: 152px; height: 48px; }
.bb3 { width: 88px; }
```
